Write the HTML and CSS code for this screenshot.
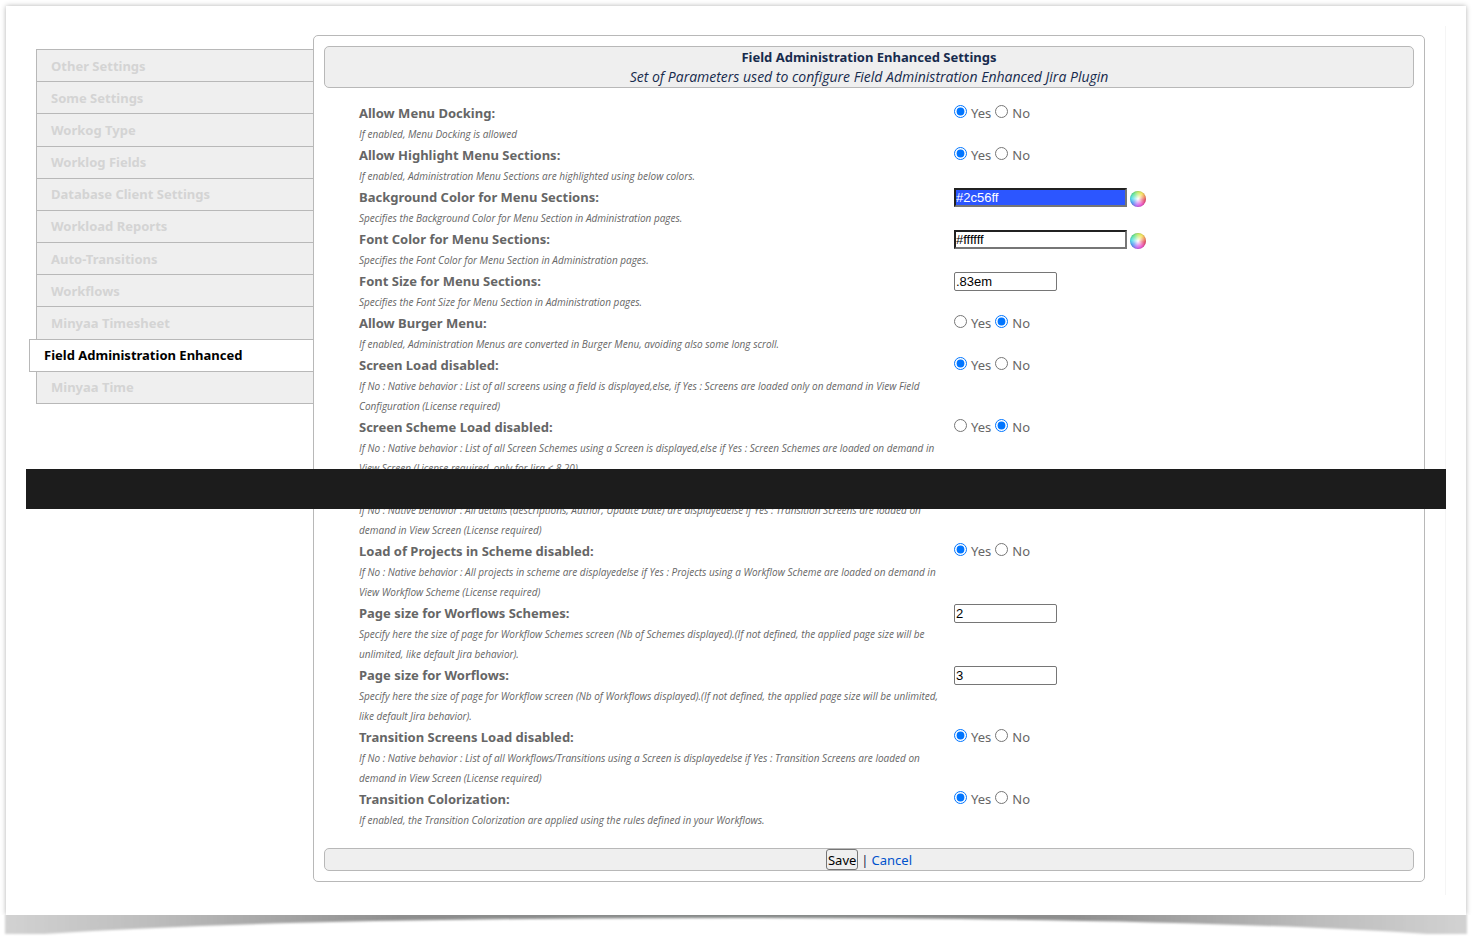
FILE: index.html
```html
<!DOCTYPE html>
<html lang="en">
<head>
<meta charset="utf-8">
<title>Field Administration Enhanced Settings</title>
<link rel="stylesheet" href="styles.css">
</head>
<body>
<main class="sheet">
  <nav class="tabs" aria-label="Settings">
    <a class="tab" href="#">Other Settings</a>
    <a class="tab" href="#">Some Settings</a>
    <a class="tab" href="#">Workog Type</a>
    <a class="tab" href="#">Worklog Fields</a>
    <a class="tab" href="#">Database Client Settings</a>
    <a class="tab" href="#">Workload Reports</a>
    <a class="tab" href="#">Auto-Transitions</a>
    <a class="tab" href="#">Workflows</a>
    <a class="tab" href="#">Minyaa Timesheet</a>
    <a class="tab active" href="#" aria-current="page">Field Administration Enhanced</a>
    <a class="tab" href="#">Minyaa Time</a>
  </nav>
  <form class="panel">
    <header class="head">
      <h1 class="title">Field Administration Enhanced Settings</h1>
      <p class="subtitle">Set of Parameters used to configure Field Administration Enhanced Jira Plugin</p>
    </header>
    <div class="rows">
      <div class="row">
        <div><div class="name" id="n1">Allow Menu Docking:</div><p class="desc">If enabled, Menu Docking is allowed</p></div>
        <div class="choice" role="radiogroup" aria-labelledby="n1"><label class="opt"><input type="radio" name="r1" checked>Yes</label><label class="opt"><input type="radio" name="r1">No</label></div>
      </div>
      <div class="row">
        <div><div class="name" id="n2">Allow Highlight Menu Sections:</div><p class="desc">If enabled, Administration Menu Sections are highlighted using below colors.</p></div>
        <div class="choice" role="radiogroup" aria-labelledby="n2"><label class="opt"><input type="radio" name="r2" checked>Yes</label><label class="opt"><input type="radio" name="r2">No</label></div>
      </div>
      <div class="row">
        <div><label class="name" for="bg">Background Color for Menu Sections:</label><p class="desc">Specifies the Background Color for Menu Section in Administration pages.</p></div>
        <div class="choice picker"><input class="color blue" id="bg" type="text" value="#2c56ff"><button class="wheel" type="button" aria-label="Pick background color"></button></div>
      </div>
      <div class="row">
        <div><label class="name" for="fg">Font Color for Menu Sections:</label><p class="desc">Specifies the Font Color for Menu Section in Administration pages.</p></div>
        <div class="choice picker"><input class="color" id="fg" type="text" value="#ffffff"><button class="wheel" type="button" aria-label="Pick font color"></button></div>
      </div>
      <div class="row">
        <div><label class="name" for="size">Font Size for Menu Sections:</label><p class="desc">Specifies the Font Size for Menu Section in Administration pages.</p></div>
        <div class="choice"><input class="text" id="size" type="text" value=".83em"></div>
      </div>
      <div class="row">
        <div><div class="name" id="n3">Allow Burger Menu:</div><p class="desc">If enabled, Administration Menus are converted in Burger Menu, avoiding also some long scroll.</p></div>
        <div class="choice" role="radiogroup" aria-labelledby="n3"><label class="opt"><input type="radio" name="r3">Yes</label><label class="opt"><input type="radio" name="r3" checked>No</label></div>
      </div>
      <div class="row">
        <div><div class="name" id="n4">Screen Load disabled:</div><p class="desc">If No : Native behavior : List of all screens using a field is displayed,else, if Yes : Screens are loaded only on demand in View Field Configuration (License required)</p></div>
        <div class="choice" role="radiogroup" aria-labelledby="n4"><label class="opt"><input type="radio" name="r4" checked>Yes</label><label class="opt"><input type="radio" name="r4">No</label></div>
      </div>
      <div class="row">
        <div><div class="name" id="n5">Screen Scheme Load disabled:</div><p class="desc">If No : Native behavior : List of all Screen Schemes using a Screen is displayed,else if Yes : Screen Schemes are loaded on demand in View Screen (License required, only for Jira &lt; 8.20)</p></div>
        <div class="choice" role="radiogroup" aria-labelledby="n5"><label class="opt"><input type="radio" name="r5">Yes</label><label class="opt"><input type="radio" name="r5" checked>No</label></div>
      </div>
      <div class="row cut">
        <p class="desc">If No : Native behavior : All details (descriptions, Author, Update Date) are displayedelse if Yes : Transition Screens are loaded on demand in View Screen (License required)</p>
      </div>
      <div class="row">
        <div><div class="name" id="n6">Load of Projects in Scheme disabled:</div><p class="desc">If No : Native behavior : All projects in scheme are displayedelse if Yes : Projects using a Workflow Scheme are loaded on demand in View Workflow Scheme (License required)</p></div>
        <div class="choice" role="radiogroup" aria-labelledby="n6"><label class="opt"><input type="radio" name="r6" checked>Yes</label><label class="opt"><input type="radio" name="r6">No</label></div>
      </div>
      <div class="row">
        <div><label class="name" for="p1">Page size for Worflows Schemes:</label><p class="desc">Specify here the size of page for Workflow Schemes screen (Nb of Schemes displayed).(If not defined, the applied page size will be unlimited, like default Jira behavior).</p></div>
        <div class="choice"><input class="text" id="p1" type="text" value="2"></div>
      </div>
      <div class="row">
        <div><label class="name" for="p2">Page size for Worflows:</label><p class="desc">Specify here the size of page for Workflow screen (Nb of Workflows displayed).(If not defined, the applied page size will be unlimited, like default Jira behavior).</p></div>
        <div class="choice"><input class="text" id="p2" type="text" value="3"></div>
      </div>
      <div class="row">
        <div><div class="name" id="n7">Transition Screens Load disabled:</div><p class="desc">If No : Native behavior : List of all Workflows/Transitions using a Screen is displayedelse if Yes : Transition Screens are loaded on demand in View Screen (License required)</p></div>
        <div class="choice" role="radiogroup" aria-labelledby="n7"><label class="opt"><input type="radio" name="r7" checked>Yes</label><label class="opt"><input type="radio" name="r7">No</label></div>
      </div>
      <div class="row">
        <div><div class="name" id="n8">Transition Colorization:</div><p class="desc">If enabled, the Transition Colorization are applied using the rules defined in your Workflows.</p></div>
        <div class="choice" role="radiogroup" aria-labelledby="n8"><label class="opt"><input type="radio" name="r8" checked>Yes</label><label class="opt"><input type="radio" name="r8">No</label></div>
      </div>
    </div>
    <footer class="foot"><button class="save" type="button">Save</button><span>|</span><a class="cancel" href="#">Cancel</a></footer>
  </form>
  <div class="edge"></div>
  <div class="band"></div>
</main>
<svg class="shadow" viewBox="0 0 1480 29" preserveAspectRatio="none" aria-hidden="true">
  <defs>
    <linearGradient id="fade"><stop offset="0" stop-color="#d2d2d2"/><stop offset=".1" stop-color="#bdbdbd"/><stop offset=".27" stop-color="#8e8e8e"/><stop offset=".5" stop-color="#868a89"/><stop offset=".73" stop-color="#8e8e8e"/><stop offset=".9" stop-color="#bdbdbd"/><stop offset="1" stop-color="#d2d2d2"/></linearGradient>
    <filter id="soft" x="-1%" y="-50%" width="102%" height="200%"><feGaussianBlur stdDeviation="1.2"/></filter>
  </defs>
  <path fill="url(#fade)" filter="url(#soft)" d="M5-10V19H45Q280 3 740 3Q1190 3 1427 19H1467V-10z"/>
</svg>
</body>
</html>
```
FILE: styles.css
```css
* { box-sizing: border-box; }
body {
  margin: 0;
  background: #fff;
  color: #666;
  font: 13px/20px "Noto Sans", "Open Sans", sans-serif;
}
h1, p { margin: 0; }

.sheet {
  position: relative;
  display: flex;
  align-items: flex-start;
  margin: 6px 14px 0 6px;
  padding: 29px 41px 33px 30px;
  background: #fff;
  box-shadow: 0 0 5px rgba(0, 0, 0, .3);
  clip-path: inset(-6px -8px 0 -6px);
}

.tabs {
  display: grid;
  grid-auto-rows: 1fr;
  flex: 0 0 277px;
  min-height: 355px;
  margin-top: 14px;
  border-bottom: 1px solid #b8b8b8;
}
.tab {
  display: flex;
  align-items: center;
  padding: 0 14px;
  border: solid #b8b8b8;
  border-width: 1px 0 0 1px;
  background: #efefef;
  color: #d4d4d4;
  font-weight: 700;
  text-decoration: none;
}
.tab.active {
  margin: 0 0 -1px -7px;
  border-bottom-width: 1px;
  background: #fff;
  color: #000;
}

.panel {
  flex: 1;
  min-width: 0;
  padding: 10px;
  border: 1px solid #b8b8b8;
  border-radius: 5px;
}
.head, .foot {
  border: 1px solid #b8b8b8;
  border-radius: 5px;
  background: #efefef;
}
.head {
  color: #172b4d;
  text-align: center;
}
.title { font-size: 13px; line-height: 20px; }
.subtitle {
  font: italic 14px/20px "Open Sans", "Noto Sans", sans-serif;
}

.rows { padding: 14px 0 18px 35px; }
.row {
  display: grid;
  grid-template-columns: 595fr 460fr;
}
.row.cut { padding-top: 22px; }
.name {
  display: block;
  font-weight: 700;
  line-height: 22px;
}
.desc {
  padding-right: 12px;
  font: italic 10px/20px "Open Sans", "Noto Sans", sans-serif;
}
.choice {
  display: flex;
  align-items: center;
  gap: 4px;
  height: 22px;
}
.opt {
  display: flex;
  align-items: center;
  gap: 4px;
}
.opt input {
  width: 13px;
  height: 13px;
  margin: 0 0 3px;
}
.picker {
  align-items: flex-end;
  gap: 3px;
}
.color, .text {
  height: 19px;
  padding: 0 1px;
  color: #000;
  font: 13px "Liberation Sans", Arial, sans-serif;
}
.color {
  width: 173px;
  margin-bottom: 1px;
  padding: 0;
  border: 2px inset #767676;
  background: #fff;
}
.color.blue {
  background: #2c56ff;
  color: #fff;
}
.text {
  width: 103px;
  border: 1px solid #767676;
  border-radius: 2px;
}
.wheel {
  width: 16px;
  height: 16px;
  margin-bottom: 1px;
  padding: 0;
  border: 0;
  border-radius: 50%;
  background:
    radial-gradient(circle, #fff 0, rgba(255, 255, 255, .4) 40%, rgba(255, 255, 255, 0) 70%),
    conic-gradient(#b8e858, #f4e04a 35deg, #f08a50 70deg, #e03a58 100deg, #e840c8 150deg, #b858f0 190deg, #3f8cf0 235deg, #40d8e8 275deg, #50e088 320deg, #b8e858);
  box-shadow: inset 0 0 1px rgba(60, 60, 60, .6);
}

.foot {
  display: flex;
  justify-content: center;
  align-items: center;
  gap: 3px;
  color: #172b4d;
}
.save {
  height: 21px;
  padding: 0 1px;
  border: 1px solid #767676;
  border-radius: 3px;
  background: #efefef;
  color: #000;
  font: inherit;
}
.cancel { color: #0052cc; text-decoration: none; }

.edge {
  position: absolute;
  top: 20px;
  right: 20px;
  bottom: 20px;
  border-right: 1px solid #f5f5f5;
}
.band {
  position: absolute;
  top: 463px;
  left: 20px;
  right: 20px;
  height: 40px;
  background: #1c1c1c;
}
.shadow {
  display: block;
  width: 100%;
  height: 29px;
}
```
